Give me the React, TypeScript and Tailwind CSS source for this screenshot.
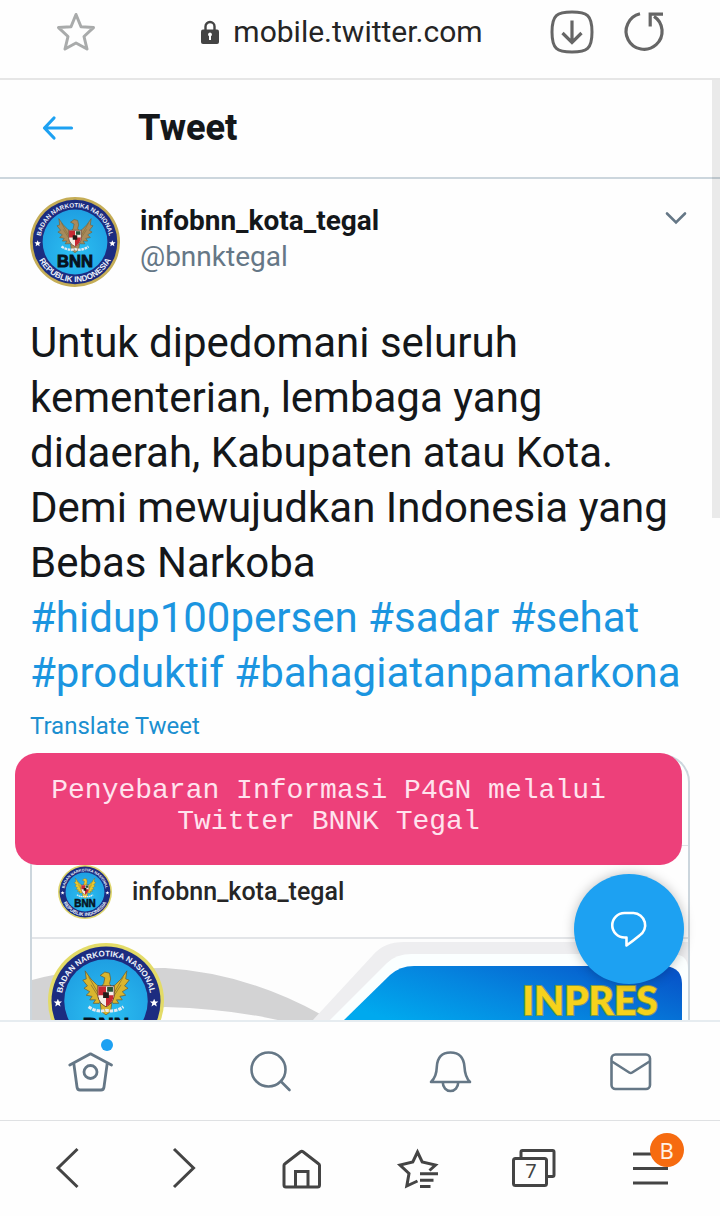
import { useId, type ReactNode } from "react";

type SealProps = { className: string; rim: string; wing: string };

function Seal({ className, rim, wing }: SealProps) {
  const id = useId();
  const shade = `${id}-shade`;
  const upper = `${id}-upper`;
  const lower = `${id}-lower`;
  return (
    <svg viewBox="0 0 100 100" className={className} role="img" aria-label="BNN">
      <defs>
        <radialGradient id={shade} cx="50%" cy="65%" r="65%">
          <stop offset="0" stopColor="#2cc0f2" />
          <stop offset="1" stopColor="#1f9fe2" />
        </radialGradient>
        <path id={upper} d="M11.5 50 A38.5 38.5 0 0 1 88.5 50" />
        <path id={lower} d="M5.5 50 A44.5 44.5 0 0 0 94.5 50" />
      </defs>
      <circle cx="50" cy="50" r="50" fill={rim} />
      <circle cx="50" cy="50" r="47" fill="#1c2c80" />
      <circle cx="50" cy="50" r="36" fill={`url(#${shade})`} />
      <g fill="#eef3fb" fontFamily="'Liberation Sans', sans-serif" fontWeight="700">
        <text textAnchor="middle" fontSize="7">
          <textPath href={`#${upper}`} startOffset="50%">BADAN NARKOTIKA NASIONAL</textPath>
        </text>
        <text textAnchor="middle" fontSize="9">
          <textPath href={`#${lower}`} startOffset="50%">REPUBLIK INDONESIA</textPath>
        </text>
      </g>
      <path fill="#fff" d="M8.5 48l1 2.4h2.6l-2 1.7.7 2.6-2.3-1.5-2.3 1.5.7-2.6-2-1.7h2.6zM91.5 48l1 2.4h2.6l-2 1.7.7 2.6-2.3-1.5-2.3 1.5.7-2.6-2-1.7h2.6z" />
      <path
        fill={wing}
        stroke="#6b5a2c"
        strokeWidth=".6"
        d="M48 36 L50 43 L44 52 L39 52 L41 49 L36 49 L38 46 L33 45 L36 42 L31 39 L34 37 L30 32 L33 31 L32 24 L37 31 L42 36 L46 39 Z M52 36 L50 43 L56 52 L61 52 L59 49 L64 49 L62 46 L67 45 L64 42 L69 39 L66 37 L70 32 L67 31 L68 24 L63 31 L58 36 L54 39 Z"
      />
      <path fill={wing} stroke="#6b5a2c" strokeWidth=".6" d="M45 28 L49 25 L53 26 L54 31 L53 35 L56 40 L44 40 L48 35 L49 30 Z M45 52 L55 52 L54 59 L50 62 L46 59 Z" />
      <path fill="none" stroke="#7a682f" strokeWidth=".6" d="M35 29l8 14M37 36l7 11M65 29l-8 14M63 36l-7 11" />
      <path fill="#f4eee6" stroke="#5b2b22" strokeWidth=".7" d="M43 37 H57 V46 Q56 52 50 55 Q44 52 43 46 Z" />
      <path fill="#c62832" d="M43.4 37.4 H50 V45 H43.4 Z M50 45 H56.6 Q56 52 50 54.6 Z" />
      <path fill="#25543a" d="M51 38h5v4h-5z" />
      <path fill="#211b18" d="M47.5 42.5h5v5h-5z" />
      <path fill="none" stroke="#e5eaf0" strokeWidth="2.6" strokeDasharray="3 .8" d="M35 55 Q42 60 50 58 Q58 60 65 55" />
      <text
        x="50"
        y="78"
        textAnchor="middle"
        fontFamily="'Liberation Sans', sans-serif"
        fontWeight="700"
        fontSize="18.5"
        fill="#06131f"
        stroke="#06131f"
        strokeWidth="1"
      >
        BNN
      </text>
    </svg>
  );
}

type IconProps = { children: ReactNode; width?: number; className?: string };

function Icon({ children, width = 3, className = "size-12" }: IconProps) {
  return (
    <svg viewBox="0 0 48 48" className={className} fill="none" stroke="currentColor" strokeWidth={width} aria-hidden="true">
      {children}
    </svg>
  );
}

function BrowserBar() {
  return (
    <header className="flex h-20 shrink-0 items-center border-b-2 border-[#e6e6e6] px-13 pb-3.5">
      <button type="button" aria-label="Bookmark" className="text-[#a9abab]">
        <Icon>
          <path d="M24 6.5L29 18.7L41.5 19.6L32 28.5L35 41L24 35L13 41L16 28.5L6.5 19.6L19 18.7Z" strokeLinejoin="round" />
        </Icon>
      </button>
      <div className="flex flex-1 items-center justify-center gap-3.5 pl-9">
        <svg viewBox="0 0 18 24" className="h-6 w-[18px]" aria-hidden="true">
          <path d="M4.5 11V6.5a4.5 4.5 0 0 1 9 0V11" fill="none" stroke="#444" strokeWidth="2.4" />
          <rect y="9.5" width="18" height="14.5" rx="2" fill="#444" />
          <path d="M9 12.5a2 2 0 0 1 1 3.7V20H8v-3.8a2 2 0 0 1 1-3.7z" fill="#fff" />
        </svg>
        <span className="text-[30px] leading-9 text-[#252525]">mobile.twitter.com</span>
      </div>
      <div className="flex gap-6 text-[#666]">
        <button type="button" aria-label="Download">
          <Icon>
            <path d="M24 4C39 4 44 7 44 24C44 41 39 44 24 44C9 44 4 41 4 24C4 7 9 4 24 4Z" />
            <path d="M24 12.5V34M14.5 25L24 34.5L33.5 25" strokeWidth="3.2" />
          </Icon>
        </button>
        <button type="button" aria-label="Reload">
          <Icon>
            <path d="M20 5.8A18 18 0 1 0 34 8.3" strokeWidth="3.2" />
            <path d="M43 6.2H30.2V18.5" strokeWidth="3.2" />
          </Icon>
        </button>
      </div>
    </header>
  );
}

function Poster() {
  return (
    <svg viewBox="0 0 656 82" className="block w-full" role="img" aria-label="INPRES">
      <defs>
        <linearGradient id="poster-blue" x1="0" y1=".7" x2="1" y2=".2">
          <stop offset="0" stopColor="#00a9ee" />
          <stop offset=".45" stopColor="#0585df" />
          <stop offset="1" stopColor="#0755c9" />
        </linearGradient>
      </defs>
      <rect width="656" height="82" fill="#fdfdfd" />
      <path fill="#d3d3d4" d="M0 41Q40 29 133 29Q215 34 290 76L284 82H250Q200 70 133 68L70 82H0Z" />
      <path fill="#eeeef0" d="M280 82L341 16Q352 3 372 3H656V82Z" />
      <path fill="#fbffff" d="M297 82L355 24Q364 15 380 15H640Q656 15 656 30V82Z" />
      <path fill="url(#poster-blue)" d="M311 82L358 36Q368 27 382 27H634Q650 29 650 45V82Z" />
      <text
        x="558"
        y="76"
        textAnchor="middle"
        fontFamily="Lato, Roboto, sans-serif"
        fontWeight="900"
        fontSize="39"
        fill="#f6d21c"
        stroke="#7f9a4a"
        strokeWidth="2"
        paintOrder="stroke"
      >
        INPRES
      </text>
    </svg>
  );
}

function Tweet() {
  return (
    <article className="px-[30px] pt-4.5">
      <div className="flex gap-5">
        <Seal className="size-[90px] shrink-0" rim="#c5ad56" wing="#a98a5b" />
        <div className="flex-1 pt-1.5">
          <h2 className="text-[28px] leading-9 font-bold text-[#14171a]">infobnn_kota_tegal</h2>
          <p className="text-[28px] leading-9 text-[#657786]">@bnnktegal</p>
        </div>
        <button type="button" aria-label="More" className="h-10 text-[#657786]">
          <svg viewBox="0 0 28 28" className="size-7" fill="none" stroke="currentColor" strokeWidth="2.6" strokeLinecap="round" aria-hidden="true">
            <path d="M5 10.5L14 19.5L23 10.5" />
          </svg>
        </button>
      </div>
      <p className="-mr-6 mt-7 text-[42px] leading-[55px] text-[#14171a]">
        Untuk dipedomani seluruh
        <br />
        kementerian, lembaga yang
        <br />
        didaerah, Kabupaten atau Kota.
        <br />
        Demi mewujudkan Indonesia yang
        <br />
        Bebas Narkoba
        <br />
        <span className="text-[#1b95e0]">
          <a href="#hidup100persen">#hidup100persen</a> <a href="#sadar">#sadar</a> <a href="#sehat">#sehat</a>
          <br />
          <a href="#produktif">#produktif</a> <a href="#bahagiatanpamarkona">#bahagiatanpamarkona</a>
        </span>
      </p>
      <button type="button" className="mt-2 block text-2xl leading-9 text-[#1b8fd0]">
        Translate Tweet
      </button>
      <div className="relative mt-2.5">
        <div className="overflow-hidden rounded-t-[28px] border-2 border-b-0 border-[#ccd6dd]">
          <div className="h-[90px] border-b border-[#dfe3e6]" />
          <div className="flex h-[93px] items-center gap-5 border-b-2 border-[#e3e5e8] px-[26px]">
            <Seal className="size-[54px]" rim="#ddd46a" wing="#ecc92c" />
            <span className="text-[25px] leading-9 font-medium text-[#262626]">infobnn_kota_tegal</span>
          </div>
          <div className="relative">
            <Poster />
            <Seal className="absolute top-1 left-4 size-[116px]" rim="#e3db67" wing="#d9b52e" />
          </div>
        </div>
        <p className="absolute -top-px right-2 -left-[15px] h-28 rounded-[22px] bg-[#ed407a] pt-[22px] pr-11 pl-1 text-center font-['Liberation_Mono',monospace] text-[28px] leading-[31px] text-[#ffe3ee]">
          Penyebaran Informasi P4GN melalui
          <br />
          Twitter BNNK Tegal
        </p>
      </div>
    </article>
  );
}

function TwitterNav() {
  return (
    <nav className="grid h-25 shrink-0 grid-cols-4 border-t-2 border-[#e6ecf0] text-[#657786]">
      <button type="button" aria-label="Home" className="flex items-center justify-center">
        <span className="relative">
          <Icon width={2.8}>
            <path d="M3.8 18L24.5 6.8L45.5 18" strokeLinecap="round" strokeLinejoin="round" />
            <path d="M7.8 16.5L11 40Q11.3 43 14 43H35Q37.7 43 38 40L41.2 16.5" />
            <circle cx="24.5" cy="25" r="6.5" />
          </Icon>
          <span className="absolute -top-2 right-px size-3 rounded-full bg-[#1da1f2]" />
        </span>
      </button>
      <button type="button" aria-label="Search" className="flex items-center justify-center">
        <Icon width={2.6}>
          <circle cx="22.5" cy="22.5" r="17" />
          <path d="M35 34.5L43.5 43" strokeLinecap="round" />
        </Icon>
      </button>
      <button type="button" aria-label="Notifications" className="flex items-center justify-center">
        <Icon width={2.6}>
          <path d="M5 35Q10.5 30 10.8 20Q11.5 5.5 24.5 5.5Q37.5 5.5 38.5 20Q39 30 44 35Z" strokeLinejoin="round" />
          <path d="M16.8 35.5A7.7 8.5 0 0 0 32.2 35.5" />
        </Icon>
      </button>
      <button type="button" aria-label="Messages" className="flex items-center justify-center">
        <Icon width={2.6}>
          <rect x="5.5" y="7.5" width="38.5" height="34.5" rx="4" />
          <path d="M6 14.5L23.2 25.5Q24.7 26.5 26.2 25.5L43.5 14.5" />
        </Icon>
      </button>
    </nav>
  );
}

function BrowserNav() {
  return (
    <nav className="grid h-24 shrink-0 grid-cols-6 border-t border-[#dfe1e3] px-2.5 text-[#444]">
      <button type="button" aria-label="Back" className="flex items-center justify-center">
        <Icon>
          <path d="M33.5 4L14 23L33.5 42" />
        </Icon>
      </button>
      <button type="button" aria-label="Forward" className="flex items-center justify-center">
        <Icon>
          <path d="M13 4L32.5 23L13 42" />
        </Icon>
      </button>
      <button type="button" aria-label="Start page" className="flex items-center justify-center">
        <Icon>
          <path d="M6 20.5Q6 19.5 7 18.8L22.5 6.8Q23.8 5.9 25 6.8L40.5 18.8Q41.5 19.5 41.5 20.5V40Q41.5 42 39.5 42H8Q6 42 6 40Z" />
          <path d="M17.5 42V26.5H30V42" />
        </Icon>
      </button>
      <button type="button" aria-label="Favorites" className="flex items-center justify-center">
        <Icon>
          <path d="M23.5 36L12.8 41L15 28.5L6 20L18.8 17L23.5 7L28.2 17L41.5 20L35.5 25.5" />
          <path d="M26 28.8H44M26 35.2H39.5M26 41.5H36.5" />
        </Icon>
      </button>
      <button type="button" aria-label="Tabs" className="flex items-center justify-center">
        <span className="relative">
          <Icon>
            <path d="M10 14V7Q10 5.5 11.5 5.5H41.5Q43 5.5 43 7V30Q43 31.5 41.5 31.5H36" />
            <rect x="2.5" y="13.5" width="33" height="27" rx="2" />
          </Icon>
          <span className="absolute top-3.5 left-0 w-10 text-center font-['Noto_Sans',sans-serif] text-xl leading-6">7</span>
        </span>
      </button>
      <button type="button" aria-label="Menu" className="flex items-center justify-center">
        <span className="relative">
          <Icon>
            <path d="M5 9H40M5 23.5H40M5 38H40" />
          </Icon>
          <span className="absolute -top-3 -right-2 size-[34px] rounded-full bg-[#f66b10] text-center font-['Noto_Sans',sans-serif] text-[22px] leading-[34px] text-[#fff1e6]">
            B
          </span>
        </span>
      </button>
    </nav>
  );
}

export default function App() {
  return (
    <div className="flex h-screen flex-col overflow-hidden bg-[#fefefe] font-[Roboto,sans-serif]">
      <BrowserBar />
      <main className="relative min-h-0 flex-1 overflow-hidden">
        <div className="flex h-[99px] items-center gap-14 border-b-2 border-[#ccd6dd] px-[34px] pb-0.5">
          <a href="#back" aria-label="Back" className="text-[#1da1f2]">
            <Icon width={3.2}>
              <path d="M37.5 24H10.5M20 14L10.5 24L20 34" strokeLinecap="round" strokeLinejoin="round" />
            </Icon>
          </a>
          <h1 className="text-4xl font-extrabold text-[#14171a]">Tweet</h1>
        </div>
        <Tweet />
        <button
          type="button"
          aria-label="Reply"
          className="absolute right-9 bottom-9 flex size-[110px] items-center justify-center rounded-full bg-[#1da1f2] text-white shadow-[0_0_12px_rgba(0,0,0,0.25)]"
        >
          <Icon width={2.6}>
            <path d="M19.5 8H28.5A12.2 12.2 0 0 1 34.5 30.5Q28.5 35.5 21.5 40.5V32.5H19.5A12.2 12.2 0 0 1 19.5 8Z" strokeLinejoin="round" />
          </Icon>
        </button>
        <div className="absolute top-0 right-0 h-[438px] w-2 bg-black/8" />
      </main>
      <TwitterNav />
      <BrowserNav />
    </div>
  );
}
